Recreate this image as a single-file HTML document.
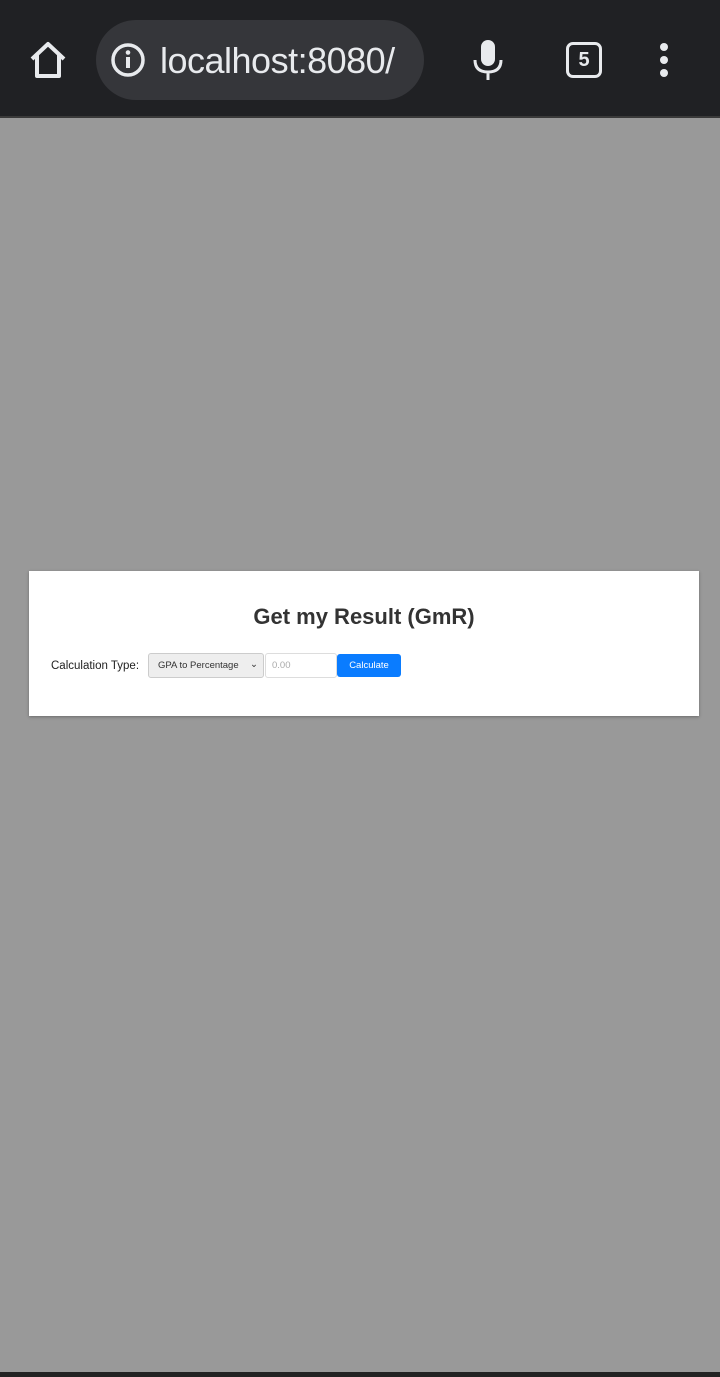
<!DOCTYPE html>
<html><head><style>
body{margin:0;width:720px;height:1377px;background:#999;font-family:"Liberation Sans",sans-serif;position:relative;overflow:hidden}
.bar{position:absolute;left:0;top:0;width:720px;height:116px;background:#202124;border-bottom:2px solid #3a3a3a}
.url{position:absolute;left:96px;top:20px;width:328px;height:80px;border-radius:40px;background:#35363a}
.url span{position:absolute;left:64px;top:20px;font-size:36px;color:#e8eaed;white-space:nowrap;width:246px;overflow:hidden;letter-spacing:-0.5px}
.card{position:absolute;left:29px;top:571px;width:670px;height:145px;background:#fff;box-shadow:0 1px 3px rgba(0,0,0,.3)}
h1{position:absolute;left:0;width:100%;top:33px;margin:0;text-align:center;font-size:22px;font-weight:bold;color:#333}
.lbl{position:absolute;left:22px;top:89px;font-size:11.5px;color:#222}
.sel{position:absolute;left:119px;top:82px;width:116px;height:25px;box-sizing:border-box;background:#eee;border:1px solid #ccc;border-radius:3px;font-size:9.5px;color:#333;padding:6px 9px}
.inp{position:absolute;left:236px;top:82px;width:72px;height:25px;box-sizing:border-box;border:1px solid #ddd;border-radius:3px;font-size:9.5px;color:#aaa;padding:6px 6px}
.btn{position:absolute;left:308px;top:83px;width:64px;height:23px;background:#0a7cff;border-radius:3px;color:#fff;font-size:9.5px;text-align:center;line-height:23px}
.bot{position:absolute;left:0;top:1372px;width:720px;height:5px;background:#222}
</style></head><body>
<div class="bar">
<svg style="position:absolute;left:28px;top:40px" width="40" height="40" viewBox="0 0 40 40"><path d="M4 19 L20 4 L36 19 M9 15 V36 H31 V15" fill="none" stroke="#e8eaed" stroke-width="4" stroke-linejoin="round"/></svg>
<div class="url"><svg style="position:absolute;left:14px;top:22px" width="36" height="36" viewBox="0 0 36 36"><circle cx="18" cy="18" r="15" fill="none" stroke="#e8eaed" stroke-width="3.5"/><rect x="16" y="15" width="4" height="11" fill="#e8eaed"/><circle cx="18" cy="10.5" r="2.3" fill="#e8eaed"/></svg><span>localhost:8080/</span></div>
<svg style="position:absolute;left:472px;top:40px" width="32" height="40" viewBox="0 0 32 40"><rect x="9" y="0" width="14" height="26" rx="7" fill="#e8eaed"/><path d="M3 20 Q3 32 16 32 Q29 32 29 20 M16 32 V40" fill="none" stroke="#e8eaed" stroke-width="3"/></svg>
<div style="position:absolute;left:566px;top:42px;width:30px;height:30px;border:3.5px solid #e8eaed;border-radius:7px;color:#e8eaed;font-weight:bold;font-size:20px;text-align:center;line-height:30px">5</div>
<svg style="position:absolute;left:656px;top:42px" width="16" height="36"><circle cx="8" cy="5" r="4" fill="#e8eaed"/><circle cx="8" cy="18" r="4" fill="#e8eaed"/><circle cx="8" cy="31" r="4" fill="#e8eaed"/></svg>
</div>
<div class="card">
<h1>Get my Result (GmR)</h1>
<div class="lbl">Calculation Type:</div>
<div class="sel">GPA to Percentage<span style="position:absolute;right:5px;top:5px">&#8964;</span></div>
<div class="inp">0.00</div>
<div class="btn">Calculate</div>
</div>
<div class="bot"></div>
</body></html>
